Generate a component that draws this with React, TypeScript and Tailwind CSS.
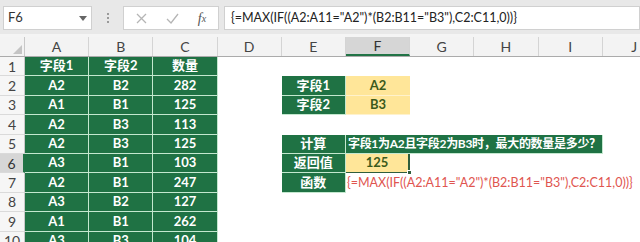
import React from 'react';

const COLS = ['A', 'B', 'C', 'D', 'E', 'F', 'G', 'H', 'I', 'J'];

const DATA = [
  ['字段1', '字段2', '数量'],
  ['A2', 'B2', '282'],
  ['A1', 'B1', '125'],
  ['A2', 'B3', '113'],
  ['A2', 'B3', '125'],
  ['A3', 'B1', '103'],
  ['A2', 'B1', '247'],
  ['A3', 'B2', '127'],
  ['A1', 'B1', '262'],
  ['A3', 'B3', '104'],
];

const FORMULA = '{=MAX(IF((A2:A11="A2")*(B2:B11="B3"),C2:C11,0))}';

const LABELS: Record<number, string> = { 2: '字段1', 3: '字段2', 5: '计算', 6: '返回值', 7: '函数' };

function GreenCell({ text, wide }: { text: string; wide?: boolean }) {
  return (
    <div
      className={`${wide ? 'w-[256.8px] justify-start pl-[2px] text-[12px] tracking-[-0.3px]' : 'w-[64.2px] justify-center text-[13px]'} shrink-0 h-full flex items-center bg-[#1f7244] border-r border-b border-[#c4e8cf] text-white font-bold whitespace-nowrap overflow-hidden`}
    >
      {text}
    </div>
  );
}

function YellowCell({ text, active }: { text: string; active?: boolean }) {
  return (
    <div
      className={`relative w-[64.2px] shrink-0 h-full flex items-center justify-center bg-[#ffe699] text-[#3b5a1c] font-bold text-[13px] ${active ? 'border-r-2 border-b border-[#2f5e3c]' : 'border-b border-[#fff2cc]'}`}
    >
      {text}
      {active && <span className="absolute -right-[4px] -bottom-[3px] w-[5px] h-[5px] bg-[#2f5e3c] border border-white" />}
    </div>
  );
}

function Empty() {
  return <div className="w-[64.2px] shrink-0 h-full" />;
}

function Row({ r }: { r: number }) {
  const cells: React.ReactNode[] = [];
  DATA[r - 1].forEach((t, i) => cells.push(<GreenCell key={'l' + i} text={t} />));
  cells.push(<Empty key="d" />);
  if (LABELS[r]) cells.push(<GreenCell key="e" text={LABELS[r]} />);
  else cells.push(<Empty key="e" />);

  if (r === 2) cells.push(<YellowCell key="f" text="A2" />);
  else if (r === 3) cells.push(<YellowCell key="f" text="B3" />);
  else if (r === 5) cells.push(<GreenCell key="f" text="字段1为A2且字段2为B3时，最大的数量是多少？" wide />);
  else if (r === 6) cells.push(<YellowCell key="f" text="125" active />);
  else if (r === 7)
    cells.push(
      <div key="f" className="w-[64.2px] shrink-0 h-full flex items-center pl-[1px] text-[#e0554f] text-[12.5px] whitespace-nowrap overflow-visible">
        {FORMULA}
      </div>
    );
  else cells.push(<Empty key="f" />);

  // merged F5:I5 takes four columns
  const rest = r === 5 ? 1 : 4;
  for (let i = 0; i < rest; i++) cells.push(<Empty key={'g' + i} />);

  return (
    <div className="flex h-[19.4px]">
      <div
        className={`w-[25px] shrink-0 h-full flex items-center justify-center text-[14px] border-b border-[#dadada] ${r === 6 ? 'bg-[#d6d6d6] text-[#333] border-r-2 border-r-[#217346]' : 'bg-[#f6f6f6] text-[#444] border-r border-r-[#c8c8c8]'}`}
      >
        {r}
      </div>
      {cells}
    </div>
  );
}

export default function App() {
  return (
    <div className="w-[640px] h-[242px] overflow-hidden bg-white font-['Lato','Noto_Sans_CJK_SC',sans-serif]">
      {/* formula bar */}
      <div className="h-[34px] bg-[#e8e8e8] flex items-start pt-[6px]">
        <div className="ml-[3px] w-[89px] h-[24px] bg-white border border-[#d0d0d0] flex items-center justify-between pl-[4px] pr-[4px] text-[13px] text-[#333]">
          <span>F6</span>
          <svg width="8" height="5" viewBox="0 0 8 5"><path d="M0 0h8L4 5z" fill="#666" /></svg>
        </div>
        <div className="w-[31px] h-[24px] flex flex-col items-center justify-center gap-[2px]">
          <span className="w-[2px] h-[2px] bg-[#9a9a9a]" />
          <span className="w-[2px] h-[2px] bg-[#9a9a9a]" />
          <span className="w-[2px] h-[2px] bg-[#9a9a9a]" />
        </div>
        <div className="w-[96px] h-[24px] bg-white border border-[#d0d0d0] flex items-center">
          <div className="w-[34px] flex justify-center">
            <svg width="11" height="11" viewBox="0 0 11 11"><path d="M1 1l9 9M10 1l-9 9" stroke="#b5b5b5" strokeWidth="1.3" /></svg>
          </div>
          <div className="w-[28px] flex justify-center">
            <svg width="13" height="11" viewBox="0 0 13 11"><path d="M1 6l4 4 7-9" stroke="#b5b5b5" strokeWidth="1.3" fill="none" /></svg>
          </div>
          <div className="w-[32px] flex justify-center font-['Liberation_Serif',serif] italic text-[14px] text-[#555]">
            f<span className="text-[10px] mt-[3px]">x</span>
          </div>
        </div>
        <div className="ml-[5px] flex-1 h-[24px] bg-white border border-[#d0d0d0] flex items-center pl-[6px] text-[12.5px] text-[#222] whitespace-nowrap">
          {FORMULA}
        </div>
      </div>
      <div className="h-[3px] bg-[#f4f4f4]" />
      {/* column headers */}
      <div className="flex h-[20px] bg-[#f3f3f3] border-b border-[#ababab]">
        <div className="w-[25px] shrink-0 h-full relative border-r border-[#c8c8c8]">
          <svg className="absolute right-[2px] bottom-[2px]" width="9" height="9" viewBox="0 0 9 9"><path d="M9 0v9H0z" fill="#c4c4c4" /></svg>
        </div>
        {COLS.map((c) => (
          <div
            key={c}
            className={`w-[64.2px] shrink-0 h-full flex items-center justify-center text-[14px] border-r border-[#d4d4d4] ${c === 'F' ? 'bg-[#d6d6d6] text-[#333] border-b-2 border-b-[#217346]' : 'text-[#444]'}`}
          >
            {c}
          </div>
        ))}
      </div>
      {[1, 2, 3, 4, 5, 6, 7, 8, 9, 10].map((r) => (
        <Row key={r} r={r} />
      ))}
    </div>
  );
}
